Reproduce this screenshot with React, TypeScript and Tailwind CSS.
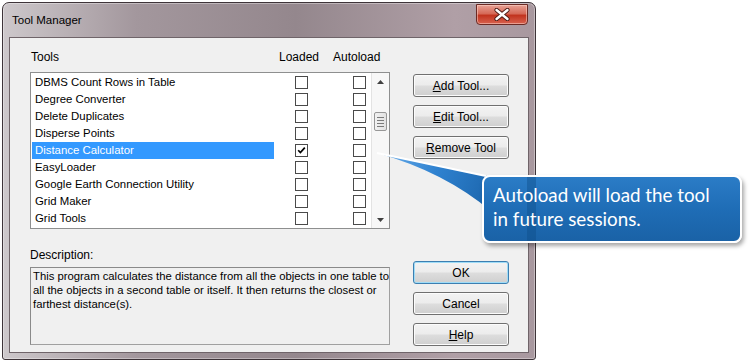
import React from "react";

const tools = [
  "DBMS Count Rows in Table",
  "Degree Converter",
  "Delete Duplicates",
  "Disperse Points",
  "Distance Calculator",
  "EasyLoader",
  "Google Earth Connection Utility",
  "Grid Maker",
  "Grid Tools",
];

function Checkbox({ checked }: { checked?: boolean }) {
  return (
    <div className="w-[13px] h-[13px] border border-[#4a4a4a] bg-white flex items-center justify-center shrink-0">
      {checked && (
        <svg width="9" height="9" viewBox="0 0 9 9">
          <path d="M1.2 4.2 L3.4 6.6 L7.8 1.6" fill="none" stroke="#000" strokeWidth="1.7" />
        </svg>
      )}
    </div>
  );
}

function Btn({ children, primary }: { children: React.ReactNode; primary?: boolean }) {
  return (
    <div
      className={
        "h-[23px] w-[96px] rounded-[3px] border flex items-center justify-center text-[12px] text-black bg-[linear-gradient(#f3f3f3_0%,#ececec_48%,#dddddd_52%,#cfcfcf_100%)] " +
        (primary
          ? "border-[#3c7fb1] shadow-[inset_0_0_0_1px_#9fdcf7]"
          : "border-[#707070] shadow-[inset_0_0_0_1px_#fcfcfc]")
      }
    >
      {children}
    </div>
  );
}

export default function App() {
  return (
    <div
      className="relative w-[749px] h-[364px] bg-white overflow-hidden"
      style={{ fontFamily: '"Liberation Sans", Arial, sans-serif' }}
    >
      {/* Window */}
      <div className="ml-[2px] mt-[2px] w-[534px] h-[358px] rounded-t-[7px] rounded-b-[3px] border border-[#3e3439] flex flex-col bg-[linear-gradient(90deg,#cdc8cb_0%,#a3979d_25%,#94878d_55%,#b09fa6_85%,#a8989f_100%)] shadow-[inset_0_0_0_1px_rgba(255,255,255,0.35)]">
        {/* Title bar */}
        <div className="relative h-[34px] shrink-0 flex items-start">
          <span className="ml-[9px] mt-[10px] text-[11.5px] text-black leading-[15px]">Tool Manager</span>
          <div className="absolute right-[7px] top-[1px] w-[52px] h-[21px] rounded-b-[4px] border border-[#6b2a24] bg-[linear-gradient(#e8a195_0%,#d66a58_45%,#c2341f_55%,#d8624f_100%)] shadow-[inset_0_0_0_1px_rgba(255,220,210,0.5)] flex items-center justify-center">
            <svg width="16" height="13" viewBox="0 0 16 13">
              <path d="M2.5 2 L13.5 11 M13.5 2 L2.5 11" stroke="#4a1b16" strokeWidth="4.2" strokeLinecap="round" />
              <path d="M2.5 2 L13.5 11 M13.5 2 L2.5 11" stroke="#ffffff" strokeWidth="2.4" strokeLinecap="round" />
            </svg>
          </div>
        </div>
        {/* Client */}
        <div className="flex-1 mx-[6px] mb-[6px] border border-[#6f6469] bg-[#f0f0f0] flex">
          {/* Left column */}
          <div className="ml-[20px] w-[360px] flex flex-col">
            <div className="mt-[12px] h-[14px] flex items-center text-[12px] text-black">
              <span className="ml-[1px] w-[248px]">Tools</span>
              <span className="w-[54px]">Loaded</span>
              <span>Autoload</span>
            </div>
            <div className="mt-[8px] h-[157px] border border-[#8e8f8f] bg-white flex">
              <div className="flex-1 pt-[1px] pl-[1px] flex flex-col">
                {tools.map((t, i) => {
                  const sel = i === 4;
                  return (
                    <div key={t} className="h-[17px] flex items-center">
                      <div
                        className={
                          "w-[242px] h-[17px] pl-[3px] flex items-center text-[11.4px] " +
                          (sel ? "bg-[#3399ff] text-white" : "text-black")
                        }
                      >
                        {t}
                      </div>
                      <div className="ml-[21px]">
                        <Checkbox checked={sel} />
                      </div>
                      <div className="ml-[45px]">
                        <Checkbox />
                      </div>
                    </div>
                  );
                })}
              </div>
              {/* Scrollbar */}
              <div className="w-[18px] border-l border-[#e3e3e3] bg-[#f7f7f7] flex flex-col items-center">
                <div className="h-[17px] flex items-center justify-center">
                  <svg width="7" height="4" viewBox="0 0 7 4">
                    <path d="M0 4 L3.5 0 L7 4 Z" fill="#404040" />
                  </svg>
                </div>
                <div className="mt-[22px] w-[13px] h-[19px] rounded-[2px] border border-[#979797] bg-[linear-gradient(90deg,#f2f2f2,#e2e2e2)] flex flex-col items-center justify-center gap-[2px]">
                  <div className="w-[7px] h-[1px] bg-[#7a7a7a]" />
                  <div className="w-[7px] h-[1px] bg-[#7a7a7a]" />
                  <div className="w-[7px] h-[1px] bg-[#7a7a7a]" />
                  <div className="w-[7px] h-[1px] bg-[#7a7a7a]" />
                </div>
                <div className="flex-1" />
                <div className="h-[17px] flex items-center justify-center">
                  <svg width="7" height="4" viewBox="0 0 7 4">
                    <path d="M0 0 L7 0 L3.5 4 Z" fill="#404040" />
                  </svg>
                </div>
              </div>
            </div>
            <div className="mt-[19px] h-[14px] flex items-center text-[12px] text-black">Description:</div>
            <div className="mt-[5px] h-[78px] border border-[#a0a0a0] border-t-[#8a8a8a] border-l-[#8a8a8a] bg-[#f0f0f0] pl-[2px] pt-[1px] text-[11.3px] leading-[14px] text-black whitespace-nowrap overflow-hidden">
              <div>This program calculates the distance from all the objects in one table to</div>
              <div>all the objects in a second table or itself. It then returns the closest or</div>
              <div>farthest distance(s).</div>
            </div>
          </div>
          {/* Buttons */}
          <div className="ml-[23px] pt-[36px] flex flex-col">
            <div className="flex flex-col gap-[8px]">
              <Btn>
                <span><u>A</u>dd Tool...</span>
              </Btn>
              <Btn>
                <span><u>E</u>dit Tool...</span>
              </Btn>
              <Btn>
                <span><u>R</u>emove Tool</span>
              </Btn>
            </div>
            <div className="mt-[102px] flex flex-col gap-[8px]">
              <Btn primary>OK</Btn>
              <Btn>Cancel</Btn>
              <Btn>
                <span><u>H</u>elp</span>
              </Btn>
            </div>
          </div>
        </div>
      </div>

      {/* Callout pointer */}
      <svg className="absolute left-0 top-0 pointer-events-none" width="749" height="364" viewBox="0 0 749 364">
        <defs>
          <linearGradient id="wedge" x1="377" y1="153" x2="490" y2="200" gradientUnits="userSpaceOnUse">
            <stop offset="0" stopColor="#6fb0ec" />
            <stop offset="0.5" stopColor="#2f82d0" />
            <stop offset="1" stopColor="#1c66ad" />
          </linearGradient>
        </defs>
        <path d="M377 153 L492 177 L492 212 Q445 172 377 153 Z" fill="url(#wedge)" />
        <path d="M377 153 L486 176" stroke="#ffffff" strokeWidth="2.2" />
      </svg>

      {/* Callout bubble */}
      <div className="absolute left-[482px] top-[175px] w-[260px] h-[68px] rounded-[8px] border-2 border-white bg-[linear-gradient(#2b7cc6_0%,#1f6db6_50%,#1a62a6_100%)] shadow-[2px_3px_4px_rgba(0,0,0,0.35)] overflow-hidden">
        <div className="absolute left-[43px] top-0 w-[9px] h-full bg-[#0d4a85]/40" />
        <div
          className="relative pl-[9px] pt-[6px] text-[18.8px] leading-[24px] text-white"
          style={{ fontFamily: 'Lato, "Open Sans", sans-serif' }}
        >
          <div>Autoload will load the tool</div>
          <div>in future sessions.</div>
        </div>
      </div>
    </div>
  );
}
